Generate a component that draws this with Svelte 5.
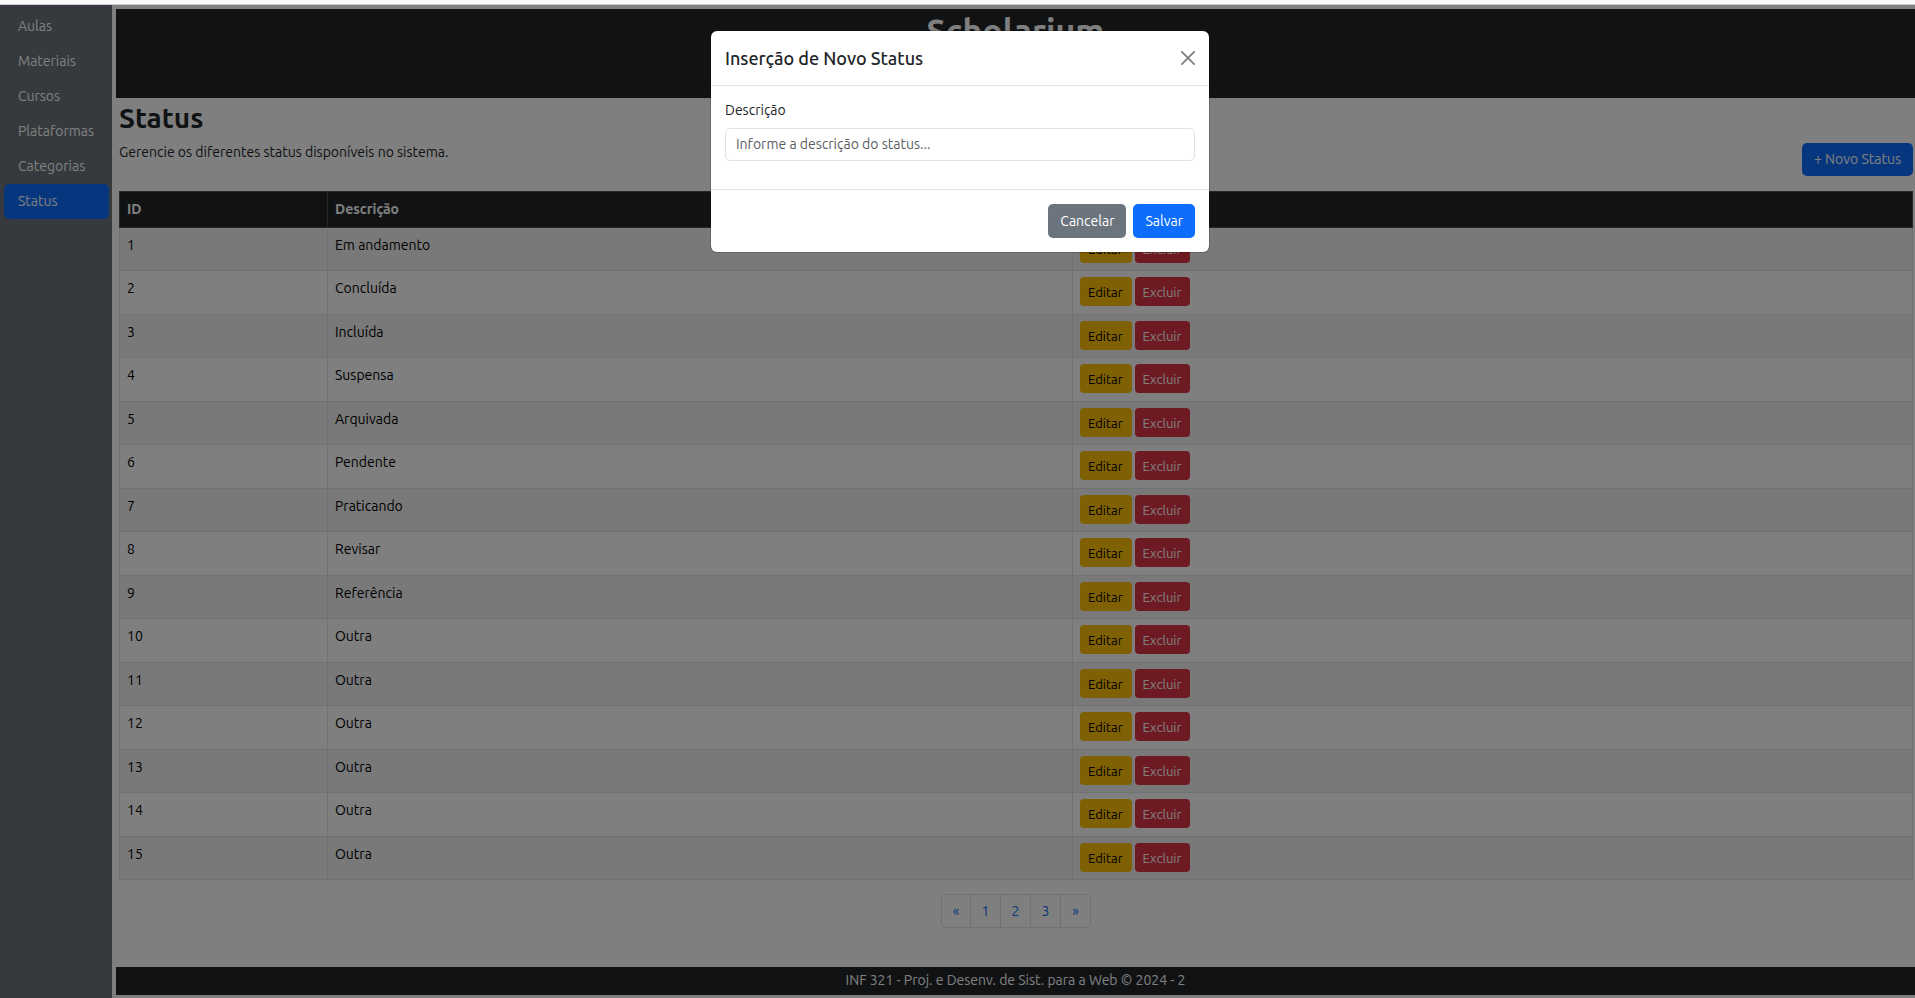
<script lang="ts">
  const links = ['Aulas', 'Materiais', 'Cursos', 'Plataformas', 'Categorias', 'Status'];
  const active = 'Status';

  const names = [
    'Em andamento', 'Concluída', 'Incluída', 'Suspensa', 'Arquivada',
    'Pendente', 'Praticando', 'Revisar', 'Referência', 'Outra',
    'Outra', 'Outra', 'Outra', 'Outra', 'Outra'
  ];
  const rows = names.map((name, i) => ({ id: i + 1, name }));
  const pages = ['«', '1', '2', '3', '»'];

  let open = $state(true);
  let description = $state('');
</script>

<div class="window">
  <div class="strip"></div>
  <div class="page">
    <nav class="sidebar">
      {#each links as link}
        <a href="#{link.toLowerCase()}" class:active={link === active}>{link}</a>
      {/each}
    </nav>

    <div class="main">
      <header class="banner"><h1>Scholarium</h1></header>

      <main class="content">
        <div class="toolbar">
          <div class="intro">
            <h2>Status</h2>
            <p>Gerencie os diferentes status disponíveis no sistema.</p>
          </div>
          <button class="btn primary" type="button" onclick={() => (open = true)}>+ Novo Status</button>
        </div>

        <table>
          <colgroup>
            <col class="col-id" />
            <col class="col-name" />
            <col />
          </colgroup>
          <thead>
            <tr><th>ID</th><th>Descrição</th><th aria-label="Ações"></th></tr>
          </thead>
          <tbody>
            {#each rows as row}
              <tr>
                <td>{row.id}</td>
                <td>{row.name}</td>
                <td>
                  <div class="actions">
                    <button class="small edit" type="button">Editar</button>
                    <button class="small delete" type="button">Excluir</button>
                  </div>
                </td>
              </tr>
            {/each}
          </tbody>
        </table>

        <nav class="pagination">
          {#each pages as page}
            <a href="#pagina">{page}</a>
          {/each}
        </nav>
      </main>

      <footer class="footer">INF 321 - Proj. e Desenv. de Sist. para a Web © 2024 - 2</footer>
    </div>

    {#if open}
      <div class="backdrop">
        <form class="modal" onsubmit={(e) => { e.preventDefault(); open = false; }}>
          <div class="modal-header">
            <h3>Inserção de Novo Status</h3>
            <button class="close" type="button" aria-label="Fechar" onclick={() => (open = false)}>
              <svg viewBox="0 0 16 16" width="14" height="14" fill="currentColor" aria-hidden="true">
                <path d="M.293.293a1 1 0 0 1 1.414 0L8 6.586 14.293.293a1 1 0 1 1 1.414 1.414L9.414 8l6.293 6.293a1 1 0 0 1-1.414 1.414L8 9.414l-6.293 6.293a1 1 0 0 1-1.414-1.414L6.586 8 .293 1.707a1 1 0 0 1 0-1.414z" />
              </svg>
            </button>
          </div>
          <div class="modal-body">
            <label for="description">Descrição</label>
            <input id="description" type="text" placeholder="Informe a descrição do status..." bind:value={description} />
          </div>
          <div class="modal-footer">
            <button class="btn secondary" type="button" onclick={() => (open = false)}>Cancelar</button>
            <button class="btn primary" type="submit">Salvar</button>
          </div>
        </form>
      </div>
    {/if}
  </div>
</div>

<style>
  :global(body) {
    margin: 0;
    background: #fff;
  }
  .window,
  .window * {
    box-sizing: border-box;
  }
  .window {
    display: flex;
    flex-direction: column;
    min-height: 100vh;
    font: 400 14px/22px Ubuntu, "Noto Sans", sans-serif;
    color: #212529;
  }
  h1, h2, h3, p {
    margin: 0;
    font-weight: 600;
  }
  p {
    font-weight: 400;
  }
  button,
  input {
    font: inherit;
    margin: 0;
  }
  button {
    cursor: pointer;
  }
  a {
    text-decoration: none;
  }

  .strip {
    height: 5px;
    background: #fafafa;
    border-bottom: 1px solid #ccc;
  }
  .page {
    position: relative;
    display: flex;
    flex: 1;
  }

  .sidebar {
    display: flex;
    flex-direction: column;
    flex: 0 0 112px;
    min-width: 0;
    padding: 4px 3px 4px 4px;
    background: #6c757d;
  }
  .sidebar a {
    padding: 6px 12px 7px 14px;
    border-radius: 5px;
    color: #fff;
  }
  .sidebar a.active {
    background: #0d6efd;
  }

  .main {
    display: flex;
    flex: 1;
    flex-direction: column;
    min-width: 0;
    padding: 4px 0 3px 4px;
  }
  .banner {
    min-height: 89px;
    background: #212529;
    color: #fff;
    text-align: center;
  }
  .banner h1 {
    font-size: 34px;
    line-height: 42px;
  }
  .content {
    flex: 1;
    padding: 0 2px 0 3px;
  }
  .toolbar {
    display: flex;
    align-items: flex-end;
    justify-content: space-between;
    min-height: 78px;
    margin-bottom: 15px;
  }
  .intro {
    display: flex;
    flex-direction: column;
    align-self: flex-start;
    gap: 6px;
    padding-top: 3px;
  }
  .intro h2 {
    font-size: 28px;
    line-height: 34px;
  }

  .btn {
    padding: 5px 11px;
    border: 1px solid transparent;
    border-radius: 5px;
    color: #fff;
  }
  .toolbar .btn {
    height: 33px;
    padding: 4px 11px 6px;
  }
  .primary {
    background: #0d6efd;
  }
  .secondary {
    background: #6c757d;
  }

  table {
    width: 100%;
    table-layout: fixed;
    border-collapse: collapse;
    color: #000;
  }
  .col-id {
    width: 11.6%;
  }
  .col-name {
    width: 41.55%;
  }
  th,
  td {
    padding: 6px 7px;
    border: 1px solid #dee2e6;
    text-align: left;
    vertical-align: top;
  }
  thead tr {
    height: 36px;
  }
  th {
    border-color: #4d5154;
    background: #212529;
    color: #fff;
    font-weight: 700;
  }
  tbody tr {
    height: 43px;
  }
  tbody tr:nth-child(even) {
    height: 44px;
  }
  tbody tr:nth-child(odd) {
    background: #f2f2f2;
  }
  .actions {
    display: flex;
    gap: 3px;
  }
  .small {
    height: 29px;
    padding: 3px 8px 3px 7px;
    border: 1px solid transparent;
    border-radius: 4px;
    font-size: 13px;
    line-height: 20px;
  }
  .edit {
    background: #ffc107;
    color: #000;
  }
  .delete {
    background: #dc3545;
    color: #fff;
  }

  .pagination {
    display: flex;
    width: fit-content;
    margin: 14px auto;
    border: 1px solid #dee2e6;
    border-radius: 5px;
  }
  .pagination a {
    min-width: 28px;
    padding: 5px 9px;
    color: #0d6efd;
    text-align: center;
  }
  .pagination a + a {
    min-width: 30px;
    border-left: 1px solid #dee2e6;
  }
  .footer {
    padding: 2px 0 4px;
    background: #212529;
    color: #fff;
    text-align: center;
  }

  .backdrop {
    position: absolute;
    inset: 0;
    padding: 26px 0 26px 5px;
    background: rgba(0, 0, 0, 0.5);
  }
  .modal {
    width: 100%;
    max-width: 498px;
    margin: 0 auto;
    border-radius: 6px;
    background: #fff;
    box-shadow: 0 0 0 1px rgba(0, 0, 0, 0.18);
  }
  .modal-header {
    display: flex;
    align-items: center;
    justify-content: space-between;
    padding: 14px;
    border-bottom: 1px solid #dee2e6;
  }
  .modal-header h3 {
    font-size: 18px;
    font-weight: 500;
    line-height: 26px;
  }
  .close {
    display: flex;
    padding: 0;
    border: 0;
    background: none;
    color: #000;
    opacity: 0.5;
  }
  .modal-body {
    display: flex;
    flex-direction: column;
    gap: 7px;
    padding: 13px 14px 28px;
  }
  .modal-body input {
    width: 100%;
    height: 33px;
    padding: 4px 10px 6px;
    border: 1px solid #dee2e6;
    border-radius: 5px;
    background: #fff;
    color: #212529;
  }
  .modal-body input::placeholder {
    color: #595c5f;
    opacity: 1;
  }
  .modal-footer {
    display: flex;
    justify-content: flex-end;
    gap: 7px;
    padding: 14px;
    border-top: 1px solid #dee2e6;
  }
</style>
